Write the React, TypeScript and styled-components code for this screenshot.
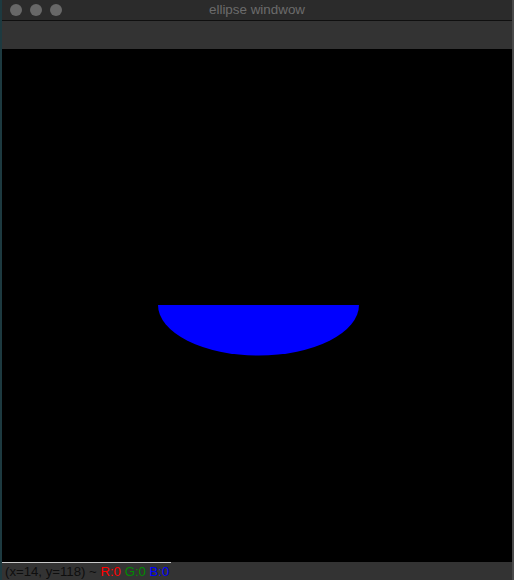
import React from "react";
import styled, { createGlobalStyle } from "styled-components";

const Global = createGlobalStyle`
  html, body { margin: 0; padding: 0; background: #000; }
  body { font-family: "Liberation Sans", Arial, sans-serif; }
`;

const Frame = styled.div`
  width: 514px;
  height: 580px;
  display: flex;
  flex-direction: column;
  box-sizing: border-box;
  border-left: 2px solid #1d3a40;
  border-right: 2px solid #4a4a4a;
  background: #2b2b2b;
  overflow: hidden;
`;

const TitleBar = styled.div`
  height: 20px;
  flex: none;
  display: flex;
  align-items: center;
  position: relative;
  background: #2b2b2b;
  border-bottom: 1px solid #0f0f0f;
  padding-left: 8px;
  gap: 8px;
`;

const Light = styled.span`
  width: 12px;
  height: 12px;
  border-radius: 50%;
  background: #686868;
  flex: none;
`;

const Title = styled.div`
  position: absolute;
  left: 0;
  right: 0;
  top: 0;
  height: 20px;
  line-height: 20px;
  text-align: center;
  color: #6c6c6c;
  font-size: 13.4px;
  pointer-events: none;
`;

const Toolbar = styled.div`
  height: 28px;
  flex: none;
  background: #333333;
`;

const Canvas = styled.div`
  flex: 1;
  background: #000;
  position: relative;
`;

const StatusBar = styled.div`
  height: 18px;
  flex: none;
  background: #333333;
  display: flex;
  align-items: stretch;
`;

const StatusLabel = styled.div`
  border-top: 1px solid #c9c9c9;
  box-sizing: border-box;
  padding: 0 2px 0 3px;
  font-size: 13.2px;
  line-height: 17px;
  color: #0e0e0e;
  white-space: pre;
`;

const Channel = styled.span<{ $c: string }>`
  color: ${(p) => p.$c};
`;

export default function App() {
  return (
    <>
      <Global />
      <Frame>
        <TitleBar>
          <Light />
          <Light />
          <Light />
          <Title>ellipse windwow</Title>
        </TitleBar>
        <Toolbar />
        <Canvas>
          <svg width="510" height="513" viewBox="0 0 510 513" style={{ display: "block" }}>
            <path d="M 156 256 H 357 A 100.5 50.5 0 0 1 156 256 Z" fill="#0000ff" />
          </svg>
        </Canvas>
        <StatusBar>
          <StatusLabel>
            (x=14, y=118) ~ <Channel $c="#ff0000">R:0</Channel> <Channel $c="#008c00">G:0</Channel>{" "}
            <Channel $c="#0000ff">B:0</Channel>
          </StatusLabel>
        </StatusBar>
      </Frame>
    </>
  );
}
